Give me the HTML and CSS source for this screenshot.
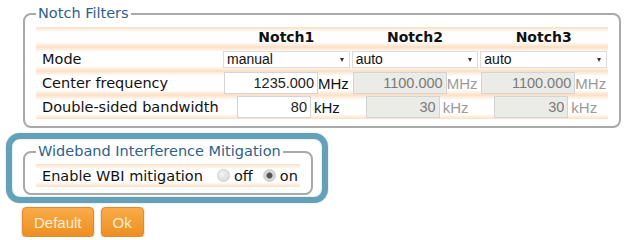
FILE: index.html
```html
<!DOCTYPE html>
<html lang="en">
<head>
    <meta charset="UTF-8">
    <meta name="viewport" content="width=device-width, initial-scale=1.0">
    <title>Notch Filters</title>
    <link rel="stylesheet" href="styles.css">
</head>
<body>
    <fieldset class="group notch">
        <legend>Notch Filters</legend>
        <table class="grid">
            <colgroup>
                <col class="col-label">
                <col class="col-notch">
                <col class="col-notch">
                <col class="col-notch">
            </colgroup>
            <tr class="head">
                <th></th>
                <th>Notch1</th>
                <th>Notch2</th>
                <th>Notch3</th>
            </tr>
            <tr>
                <td class="label">Mode</td>
                <td class="pick"><span class="select"><select><option>manual</option><option>auto</option></select></span></td>
                <td class="pick"><span class="select"><select><option>auto</option><option>manual</option></select></span></td>
                <td class="pick"><span class="select"><select><option>auto</option><option>manual</option></select></span></td>
            </tr>
            <tr>
                <td class="label">Center frequency</td>
                <td class="freq"><input type="text" value="1235.000"><span class="unit">MHz</span></td>
                <td class="freq off"><input type="text" value="1100.000" disabled><span class="unit">MHz</span></td>
                <td class="freq off"><input type="text" value="1100.000" disabled><span class="unit">MHz</span></td>
            </tr>
            <tr>
                <td class="label">Double-sided bandwidth</td>
                <td class="bw"><input type="text" value="80"><span class="unit">kHz</span></td>
                <td class="bw off"><input type="text" value="30" disabled><span class="unit">kHz</span></td>
                <td class="bw off"><input type="text" value="30" disabled><span class="unit">kHz</span></td>
            </tr>
        </table>
    </fieldset>

    <div class="highlight">
        <fieldset class="group wbi">
            <legend>Wideband Interference Mitigation</legend>
            <div class="wbi-row">
                <span class="wbi-label">Enable WBI mitigation</span>
                <label class="radio"><input type="radio" name="wbi">off</label>
                <label class="radio"><input type="radio" name="wbi" checked>on</label>
            </div>
        </fieldset>
    </div>

    <div class="buttons">
        <button type="button">Default</button>
        <button type="button">Ok</button>
    </div>
</body>
</html>
```

FILE: styles.css
```css
body {
    margin: 0;
    font-family: "DejaVu Sans", Verdana, sans-serif;
    font-size: 14.5px;
    color: #111;
    background-color: #fff;
}

.group {
    border: 2px solid #a9a9a9;
    border-radius: 8px;
    margin: 0;
    min-width: 0;
}

.group legend {
    color: #2f5f8c;
    padding: 0 2px;
    line-height: 17px;
}

.notch {
    margin: 5px 0 0 23px;
    width: 572px;
    padding: 5px 11px 7px;
}

.grid {
    width: 572px;
    table-layout: fixed;
    border-collapse: collapse;
    border-spacing: 0;
}

.col-label {
    width: 186px;
}

.grid td,
.grid th,
.wbi-row {
    padding: 0;
    background: linear-gradient(to bottom, #fbdfc4 0, #fff 5px, #fff calc(100% - 5px), #fbdfc4 100%);
}

.grid th {
    height: 20px;
    font-size: 14px;
    font-weight: bold;
    text-align: center;
}

.grid td {
    height: 24px;
}

.grid .label {
    padding-left: 6px;
}

.grid td.pick {
    height: 23px;
    padding: 0 1px;
}

.select {
    position: relative;
    display: block;
}

.select select {
    appearance: none;
    -webkit-appearance: none;
    display: block;
    width: 100%;
    height: 17px;
    margin: 0;
    padding: 0 3px;
    border: 1px solid #dcdcdc;
    border-radius: 0;
    background-color: #fff;
    font-family: "Liberation Sans", Arial, sans-serif;
    font-size: 14px;
    line-height: 15px;
    color: #111;
}

.select::after {
    content: "";
    position: absolute;
    right: 6px;
    top: 7px;
    border-left: 2px solid transparent;
    border-right: 2px solid transparent;
    border-top: 4px solid #333;
}

.grid input[type="text"] {
    box-sizing: border-box;
    height: 22px;
    margin: 0;
    padding: 0 3px 0 0;
    border: 1px solid #d4d4d4;
    background-color: #fff;
    text-align: right;
    font-family: "Liberation Sans", Arial, sans-serif;
    font-size: 14.5px;
    color: #222;
    vertical-align: middle;
}

.grid input[disabled] {
    background-color: #ebebe7;
    color: #7a7a7a;
}

.unit {
    font-family: "Liberation Sans", Arial, sans-serif;
    font-size: 15px;
    vertical-align: middle;
}

.off .unit {
    color: #9a9a9a;
}

.freq {
    padding-left: 2px !important;
}

.freq input[type="text"] {
    width: 94px;
}

.bw {
    padding-left: 15px !important;
}

.bw input[type="text"] {
    width: 74px;
    margin-right: 3px;
}

.highlight {
    width: 290px;
    margin: 5px 0 0 6px;
    padding: 4px 9px 2px 11px;
    border: 6px solid #64a0b8;
    border-radius: 14px;
    box-shadow: 0 0 1px #3d7d97, inset 0 0 2px #a9d0de;
}

.wbi {
    width: 264px;
    padding: 4px 11px 6px;
}

.wbi-row {
    display: flex;
    align-items: center;
    height: 23px;
    padding-left: 6px;
    white-space: nowrap;
}

.wbi-label {
    flex-shrink: 0;
    margin-right: 14px;
}

.radio {
    display: inline-flex;
    flex-shrink: 0;
    align-items: center;
    margin-right: 10px;
}

.radio input {
    appearance: none;
    -webkit-appearance: none;
    width: 13px;
    height: 13px;
    margin: 0 4px 0 0;
    border: 1px solid #cfcfcf;
    border-radius: 50%;
    background: radial-gradient(circle at 40% 35%, #f4f4f4, #d2d2d2);
}

.radio input:checked {
    background: radial-gradient(circle, #555 0, #555 2.5px, #d8d8d8 3.5px, #cacaca 100%);
}

.buttons {
    display: flex;
    gap: 7px;
    margin: 4px 0 0 22px;
}

.buttons button {
    height: 30px;
    padding: 0 11px;
    border: 1px solid #e2892a;
    border-radius: 4px;
    background: linear-gradient(to bottom, #f9ab48, #ee8f22);
    box-shadow: 0 1px 2px rgba(120, 60, 0, 0.45);
    font-family: "Liberation Sans", Arial, sans-serif;
    font-size: 15px;
    color: #fdf0d6;
    cursor: pointer;
}
```
